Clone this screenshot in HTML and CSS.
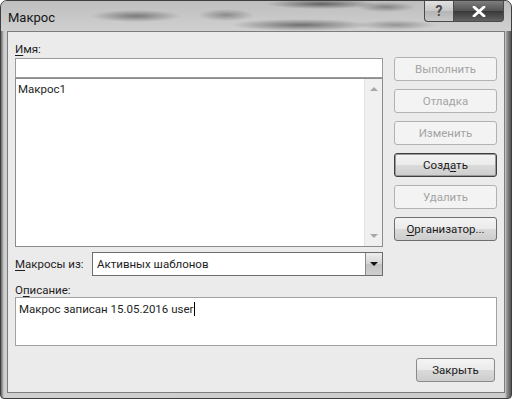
FILE: index.html
```html
<!DOCTYPE html>
<html lang="ru">
<head>
  <meta charset="UTF-8" />
  <title>Макрос</title>
  <link rel="stylesheet" href="styles.css">
</head>
<body>
  <div class="window">
    <div class="titlebar">
      <span class="caption">Макрос</span>
      <div class="caption-buttons">
        <span class="cap-btn help">?</span>
        <span class="cap-btn close">
          <svg width="14" height="11" viewBox="0 0 14 11">
            <path d="M2 1 L12 10 M12 1 L2 10" stroke="#fff" stroke-width="2.8" stroke-linecap="round" />
          </svg>
        </span>
      </div>
    </div>

    <div class="client">
      <div class="top">
        <div class="left-col">
          <div class="label"><u>И</u>мя:</div>
          <div class="name-input"></div>
          <div class="listbox">
            <div class="list-items">
              <div class="item">Макрос1</div>
            </div>
            <div class="scrollbar">
              <span class="arrow up"></span>
              <span class="arrow down"></span>
            </div>
          </div>
          <div class="source-row">
            <span class="label"><u>М</u>акросы из:</span>
            <div class="combo">
              <span class="combo-text">Активных шаблонов</span>
              <span class="combo-btn"><span class="arrow black"></span></span>
            </div>
          </div>
        </div>

        <div class="actions">
          <button class="btn" disabled>Выполнить</button>
          <button class="btn" disabled>Отладка</button>
          <button class="btn" disabled>Изменить</button>
          <button class="btn default">Созд<u>а</u>ть</button>
          <button class="btn" disabled>Удалить</button>
          <button class="btn"><u>О</u>рганизатор...</button>
        </div>
      </div>

      <div class="label desc-label">О<u>п</u>исание:</div>
      <div class="description">Макрос записан 15.05.2016 user<span class="caret"></span></div>

      <div class="footer">
        <button class="btn close-btn">Закрыть</button>
      </div>
    </div>
  </div>
</body>
</html>
```

FILE: styles.css
```css
body {
  margin: 0;
  background: #fff;
  font-family: Roboto, 'Open Sans', sans-serif;
  font-size: 11.5px;
  color: #1e1e1e;
}

.window {
  width: 512px;
  height: 399px;
  box-sizing: border-box;
  display: flex;
  flex-direction: column;
  border: 1px solid #3e3e3e;
  border-radius: 7px 7px 4px 4px;
  overflow: hidden;
  background: linear-gradient(to right, #6a6a6a 0, #cfcfcf 3px, #cdcdcd 504px, #8e8e8e 506px, #555 510px);
}

.titlebar {
  height: 30px;
  display: flex;
  align-items: flex-start;
  padding: 0 7px;
  background:
    radial-gradient(ellipse 45px 6px at 135px 15px, rgba(70,70,70,0.6), transparent),
    radial-gradient(ellipse 28px 6px at 225px 14px, rgba(80,80,80,0.5), transparent),
    radial-gradient(ellipse 55px 5px at 320px 3px, rgba(50,50,50,0.65), transparent),
    radial-gradient(ellipse 70px 6px at 300px 24px, rgba(50,50,50,0.6), transparent),
    radial-gradient(ellipse 30px 5px at 385px 6px, rgba(70,70,70,0.5), transparent),
    radial-gradient(ellipse 40px 5px at 395px 24px, rgba(80,80,80,0.45), transparent),
    linear-gradient(#bebebe, #d0d0d0);
}

.caption {
  margin-top: 9px;
  font-size: 13px;
  color: #151515;
}

.caption-buttons {
  margin-left: auto;
  display: flex;
}

.cap-btn {
  height: 20px;
  display: flex;
  align-items: center;
  justify-content: center;
  border: 1px solid #4a4a4a;
  border-top: none;
}

.help {
  width: 28px;
  border-radius: 0 0 0 4px;
  border-right: none;
  background: linear-gradient(#e2e2e2, #c6c6c6 50%, #b4b4b4 51%, #c8c8c8);
  font-weight: bold;
  font-size: 14px;
  color: #4a4a4a;
}

.close {
  width: 49px;
  border-radius: 0 0 4px 0;
  background: linear-gradient(#7e7e7e, #525252 50%, #383838 51%, #626262);
}

.client {
  flex: 1;
  margin: 0 6px 5px 6px;
  padding: 9px 7px 0 7px;
  background: #ebebeb;
  border: 1px solid #7c7c7c;
}

.top {
  display: flex;
  gap: 11px;
}

.left-col {
  width: 368px;
  display: flex;
  flex-direction: column;
}

.label {
  height: 17px;
  line-height: 16px;
  color: #1e1e1e;
}

u {
  text-decoration-thickness: 1px;
  text-underline-offset: 2px;
}

.name-input {
  height: 20px;
  box-sizing: border-box;
  background: #fff;
  border: 1px solid #9a9a9a;
}

.listbox {
  height: 169px;
  box-sizing: border-box;
  display: flex;
  background: #fff;
  border: 1px solid #8c8c8c;
}

.list-items {
  flex: 1;
  padding: 2px 2px;
}

.item {
  line-height: 16px;
}

.scrollbar {
  width: 17px;
  display: flex;
  flex-direction: column;
  justify-content: space-between;
  align-items: center;
  padding: 8px 0;
  background: #f0f0f0;
  border-left: 1px solid #e2e2e2;
}

.arrow {
  width: 0;
  height: 0;
  border-left: 4px solid transparent;
  border-right: 4px solid transparent;
}

.arrow.up {
  border-bottom: 4px solid #a8a8a8;
}

.arrow.down {
  border-top: 4px solid #a8a8a8;
}

.arrow.black {
  border-top: 4px solid #111;
}

.source-row {
  margin-top: 5px;
  display: flex;
  align-items: center;
}

.source-row .label {
  width: 77px;
  height: auto;
}

.combo {
  flex: 1;
  height: 24px;
  box-sizing: border-box;
  display: flex;
  background: #fff;
  border: 1px solid #6c6c6c;
}

.combo-text {
  flex: 1;
  padding-left: 4px;
  line-height: 22px;
}

.combo-btn {
  width: 16px;
  display: flex;
  align-items: center;
  justify-content: center;
  background: linear-gradient(#eeeeee, #d4d4d4 50%, #c2c2c2 51%, #cfcfcf);
  border-left: 1px solid #8a8a8a;
}

.actions {
  flex: 1;
  padding-top: 16px;
  display: flex;
  flex-direction: column;
  gap: 8px;
}

.btn {
  height: 24px;
  padding: 0;
  font: inherit;
  color: #1a1a1a;
  border: 1px solid #6e6e6e;
  border-radius: 3px;
  background: linear-gradient(#f4f4f4, #ebebeb 48%, #dadada 52%, #cdcdcd);
}

.btn:disabled {
  color: #a4a4a4;
  border-color: #b2b2b2;
  background: #f3f3f3;
}

.btn.default {
  border-color: #3e3e3e;
  box-shadow: inset 0 0 0 1px #9a9a9a;
}

.desc-label {
  margin-top: 6px;
  height: 15px;
}

.description {
  height: 49px;
  box-sizing: border-box;
  padding: 3px 3px;
  line-height: 16px;
  background: #fff;
  border: 1px solid #a2a2a2;
}

.caret {
  display: inline-block;
  width: 1px;
  height: 14px;
  margin-left: 1px;
  vertical-align: -3px;
  background: #000;
}

.footer {
  margin-top: 12px;
  display: flex;
  justify-content: flex-end;
  padding-right: 2px;
}

.close-btn {
  width: 79px;
  border-color: #8a8a8a;
}
```
